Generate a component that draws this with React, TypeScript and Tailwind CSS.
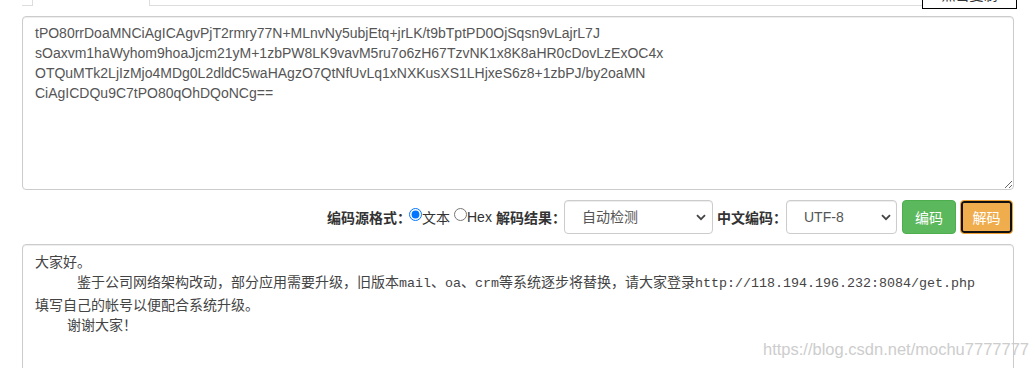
import React from "react";

const input1 =
  "tPO80rrDoaMNCiAgICAgvPjT2rmry77N+MLnvNy5ubjEtq+jrLK/t9bTptPD0OjSqsn9vLajrL7J\n" +
  "sOaxvm1haWyhom9hoaJjcm21yM+1zbPW8LK9vavM5ru7o6zH67TzvNK1x8K8aHR0cDovLzExOC4x\n" +
  "OTQuMTk2LjIzMjo4MDg0L2dldC5waHAgzO7QtNfUvLq1xNXKusXS1LHjxeS6z8+1zbPJ/by2oaMN\n" +
  "CiAgICDQu9C7tPO80qOhDQoNCg==";

function Chevron() {
  return (
    <svg width="10" height="7" viewBox="0 0 10 7" className="shrink-0">
      <path d="M1 1.2 L5 5.2 L9 1.2" fill="none" stroke="#444" strokeWidth="1.8" />
    </svg>
  );
}

function FakeSelect({ text, wide }: { text: string; wide: boolean }) {
  return (
    <div
      className={
        (wide ? "w-[149px] pr-[6px]" : "w-[111px] pr-[5px]") +
        " h-[34px] flex items-center justify-between pl-[17px] border border-[#ccc] rounded-[4px] bg-white text-[14px] text-[#555] shadow-[inset_0_1px_1px_rgba(0,0,0,0.075)] font-[family-name:'Liberation_Sans','Noto_Sans_CJK_SC',sans-serif]"
      }
    >
      <span>{text}</span>
      <Chevron />
    </div>
  );
}

function M({ children }: { children: React.ReactNode }) {
  return (
    <span className="text-[13.33px] font-[family-name:'Liberation_Mono',monospace]">{children}</span>
  );
}

const cjkBold = "font-bold font-[family-name:'Noto_Sans_CJK_SC',sans-serif]";

export default function App() {
  return (
    <div className="relative w-[1035px] h-[368px] overflow-hidden bg-white pl-[22px] font-[family-name:'Liberation_Sans','Noto_Sans_CJK_SC',sans-serif]">
      {/* tab bar */}
      <div className="flex items-start w-[995px] h-[9px]">
        <div className="w-[10px] h-[6px] border-b border-[#ddd]" />
        <div className="w-[118px] h-[6px] border-x border-[#ddd]" />
        <div className="flex-1 h-[6px] border-b border-[#ddd]" />
        <div className="w-[95px] h-[30px] -mt-[21px] border border-black bg-white flex items-end justify-center pb-[4px] text-[14px] text-[#333] leading-[20px] font-[family-name:'Noto_Sans_CJK_SC',sans-serif]">
          点击复制
        </div>
      </div>

      {/* input textarea */}
      <textarea
        readOnly
        defaultValue={input1}
        className="block mt-[7px] w-[992px] h-[174px] border border-[#ccc] rounded-[4px] px-[12px] py-[6px] text-[14px] leading-[20px] text-[#555] bg-white shadow-[inset_0_1px_1px_rgba(0,0,0,0.075)] outline-none font-[family-name:'Liberation_Sans',Arial,sans-serif]"
      />

      {/* controls row */}
      <div className="mt-[10px] w-[992px] h-[34px] flex items-center justify-end text-[14px] leading-[20px] text-[#333]">
        <span className={cjkBold + " w-[84px]"}>编码源格式：</span>
        <input type="radio" checked readOnly className="w-[13px] h-[13px] ml-[-2px] mb-[6px]" />
        <span className="w-[28px] font-[family-name:'Noto_Sans_CJK_SC',sans-serif]">文本</span>
        <input type="radio" readOnly className="w-[13px] h-[13px] ml-[4px] mb-[6px]" />
        <span className="w-[25px]">Hex</span>
        <span className={cjkBold + " w-[70px] ml-[4px]"}>解码结果：</span>
        <div className="ml-[-2px]">
          <FakeSelect text="自动检测" wide={true} />
        </div>
        <span className={cjkBold + " w-[70px] ml-[4px]"}>中文编码：</span>
        <div className="ml-[-1px]">
          <FakeSelect text="UTF-8" wide={false} />
        </div>
        <button className="ml-[5px] w-[54px] h-[34px] rounded-[4px] bg-[#5cb85c] border border-[#4cae4c] text-white text-[14px] font-[family-name:'Noto_Sans_CJK_SC',sans-serif]">
          编码
        </button>
        <button className="ml-[4px] mr-[1px] w-[53px] h-[34px] rounded-[4px] bg-[#f0ad4e] border border-[#eea236] text-white text-[14px] shadow-[inset_0_0_0_2px_#111] font-[family-name:'Noto_Sans_CJK_SC',sans-serif]">
          解码
        </button>
      </div>

      {/* output box */}
      <div className="mt-[10px] w-[992px] h-[160px] border border-[#ccc] rounded-[4px] px-[12px] py-[6px] text-[14px] leading-[20px] text-[#444] whitespace-pre bg-white shadow-[inset_0_1px_1px_rgba(0,0,0,0.075)] font-[family-name:'Noto_Sans_CJK_SC','Liberation_Mono',monospace]">
        <div>大家好。</div>
        <div>
          {"\u3000\u3000\u3000"}鉴于公司网络架构改动，部分应用需要升级，旧版本<M>mail</M>、<M>oa</M>、<M>crm</M>等系统逐步将替换，请大家登录<M>http://118.194.196.232:8084/get.php</M>
        </div>
        <div>填写自己的帐号以便配合系统升级。</div>
        <div>
          <M>{"    "}</M>谢谢大家！
        </div>
      </div>

      {/* watermark */}
      <div className="absolute left-[763px] top-[339px] text-[16.5px] leading-[20px] text-[#cdcdcd] whitespace-nowrap font-[family-name:'Liberation_Sans',Arial,sans-serif]">
        https://blog.csdn.net/mochu7777777
      </div>
    </div>
  );
}
